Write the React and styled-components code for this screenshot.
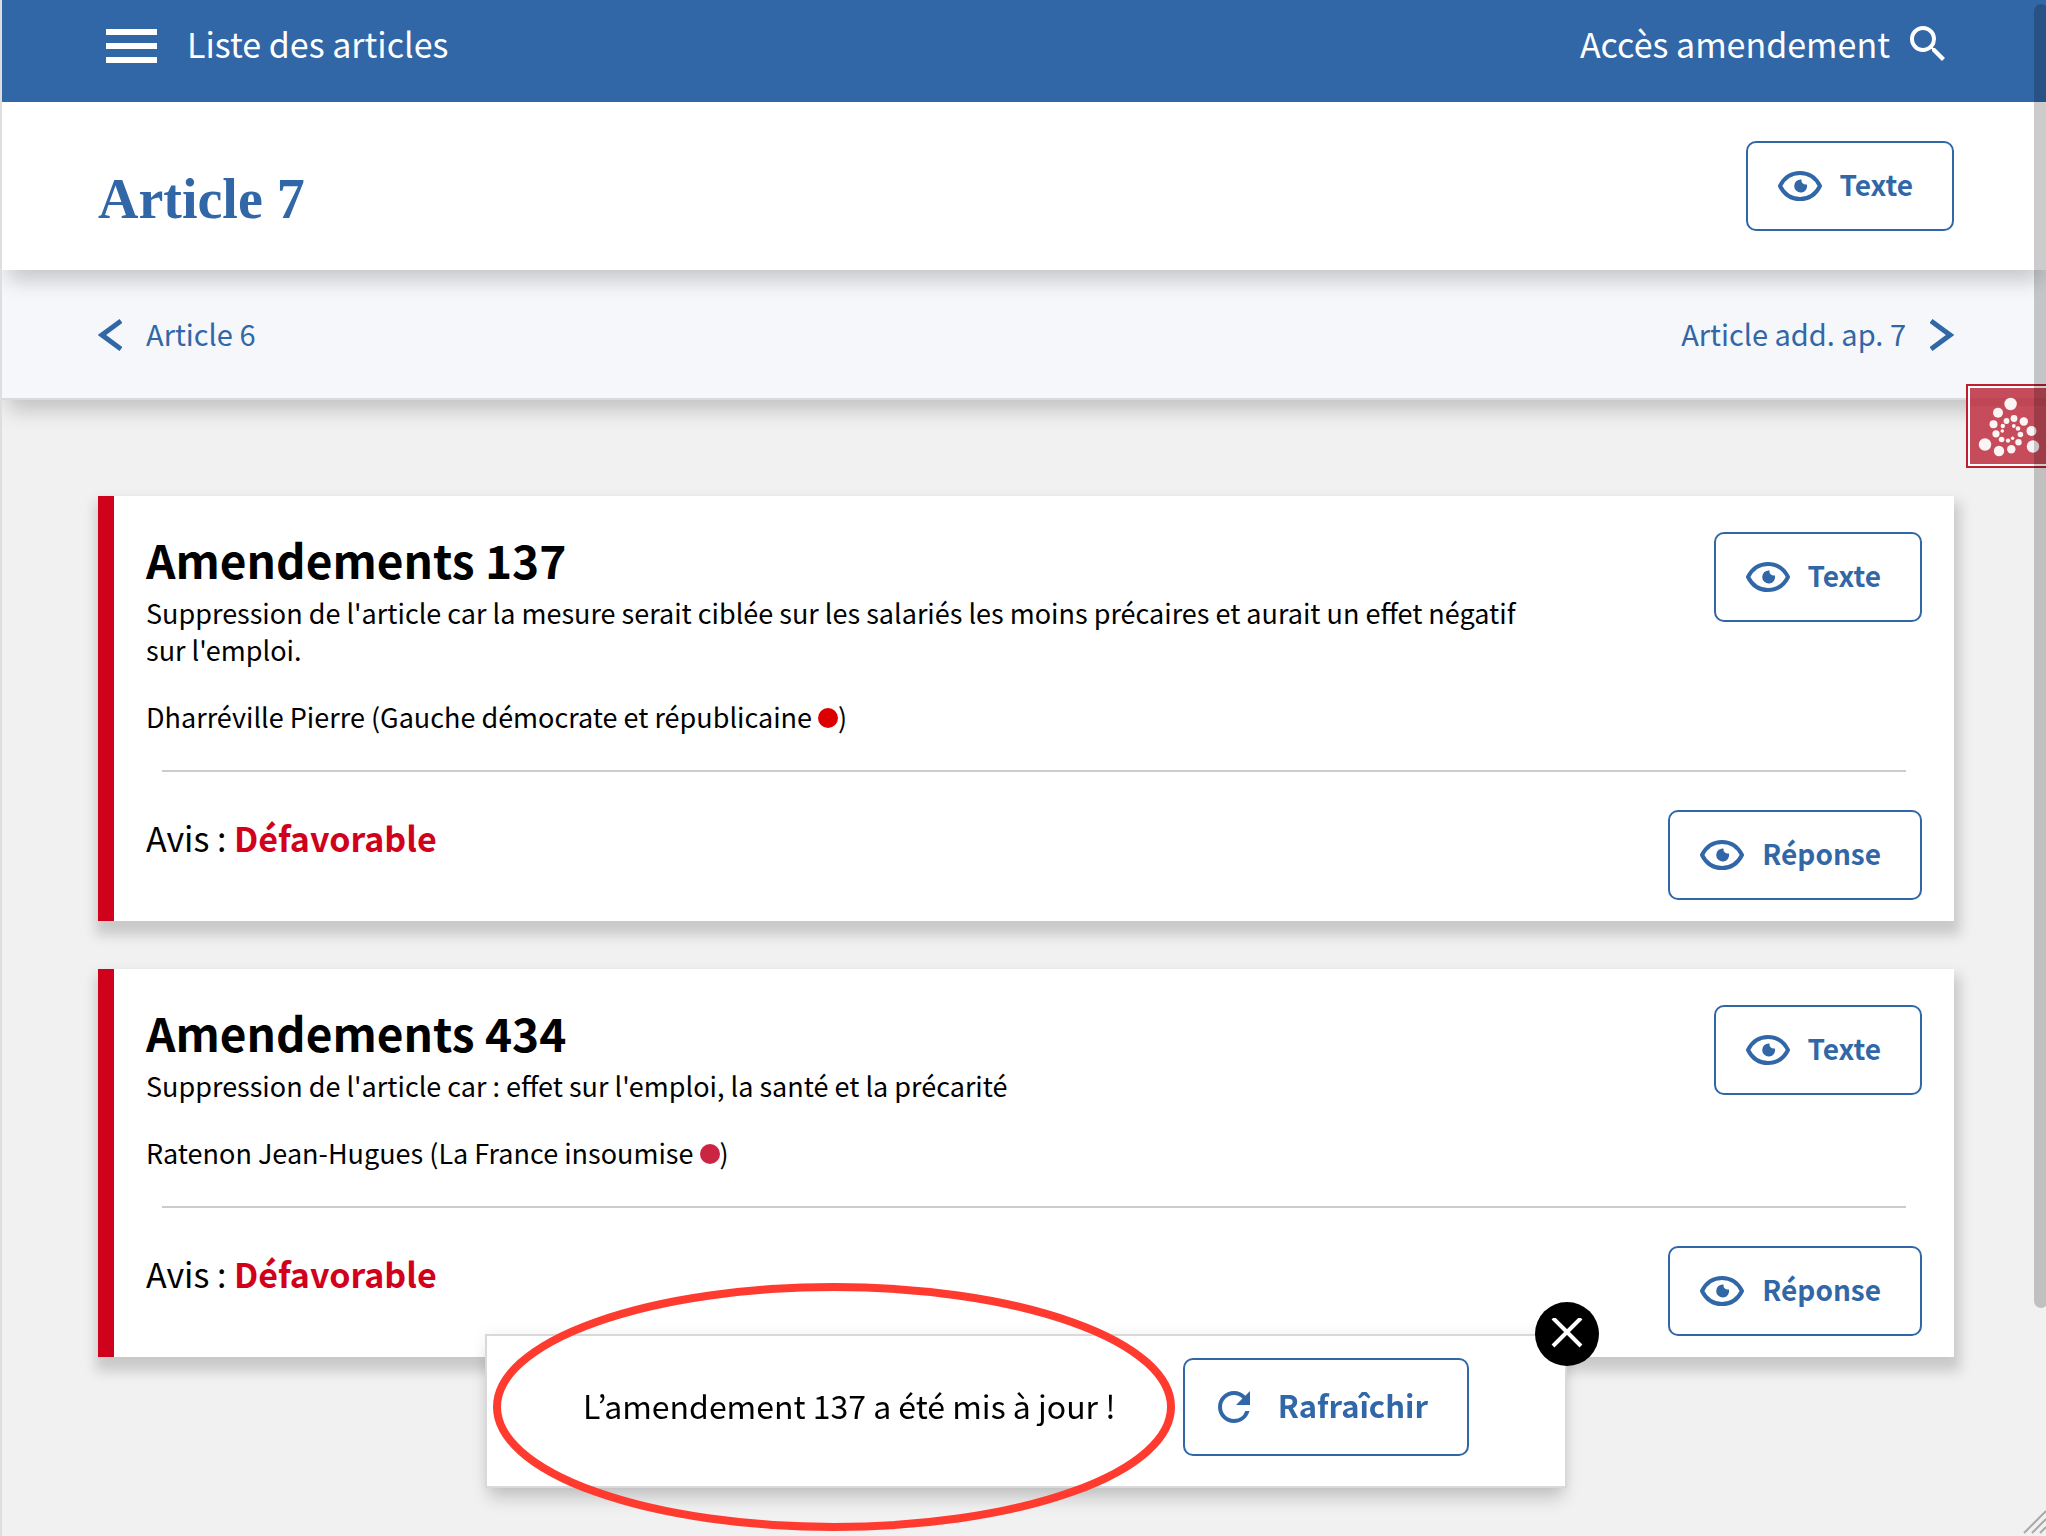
import React from 'react';
import styled, { createGlobalStyle } from 'styled-components';

const blue = '#3267a7';
const red = '#d0021b';
const sans = '"Noto Sans CJK KR", "Noto Sans", sans-serif';
const barShadow = '0 16px 20px -6px rgba(0, 0, 0, 0.2)';

const GlobalStyle = createGlobalStyle`
  *, *::before, *::after { box-sizing: border-box; }
  body { margin: 0; background: #f1f1f1; color: #000; font-family: ${sans}; font-size: 27px; line-height: 37px; }
  h1, h2, p { margin: 0; }
  a { color: inherit; text-decoration: none; }
`;

const Page = styled.div`
  min-height: 100vh;
  border-left: 2px solid #dedede;
  overflow: hidden;
`;

const TopBar = styled.header`
  display: flex;
  align-items: flex-start;
  justify-content: space-between;
  height: 102px;
  padding: 20px 94px 0 104px;
  background: ${blue};
  color: #fff;
`;

const TopLink = styled.a`
  display: flex;
  align-items: center;
  gap: ${(p) => p.$gap}px;
  font-size: 34px;
  line-height: 48px;
`;

const TitleBar = styled.div`
  position: relative;
  z-index: 1;
  display: flex;
  align-items: center;
  justify-content: space-between;
  height: 168px;
  padding: 0 92px 0 96px;
  background: #fff;
  box-shadow: ${barShadow};
`;

const Title = styled.h1`
  padding-top: 26px;
  color: ${blue};
  font-family: "Liberation Serif", serif;
  font-size: 56px;
  font-weight: 700;
  line-height: 64px;
`;

const SiblingNav = styled.nav`
  display: flex;
  align-items: center;
  justify-content: space-between;
  height: 130px;
  padding: 2px 92px 0 96px;
  border-bottom: 2px solid #d9dada;
  background: #f5f7fb;
  box-shadow: ${barShadow};
`;

const SiblingLink = styled.a`
  display: flex;
  align-items: center;
  gap: 24px;
  color: ${blue};
  font-size: 29px;
`;

const Cards = styled.main`
  display: flex;
  flex-direction: column;
  gap: 48px;
  padding: 96px 92px 180px 96px;
`;

const Card = styled.article`
  padding: 36px 32px 21px;
  border-left: 16px solid ${red};
  background: #fff;
  box-shadow: 2px 10px 12px 4px rgba(0, 0, 0, 0.17);
`;

const CardRow = styled.div`
  display: flex;
  align-items: flex-start;
  justify-content: space-between;
`;

const Summary = styled.div`
  max-width: 1400px;
`;

const CardTitle = styled.h2`
  margin-bottom: 8px;
  font-size: 46px;
  font-weight: 700;
  line-height: 54px;
`;

const Author = styled.p`
  margin-top: 30px;
`;

const Dot = styled.span`
  display: inline-block;
  width: 20px;
  height: 20px;
  border-radius: 50%;
  background: ${(p) => p.$color};
`;

const Divider = styled.hr`
  height: 2px;
  margin: 35px 16px 38px;
  border: 0;
  background: #ccc;
`;

const Opinion = styled.p`
  font-size: 34px;
  line-height: 56px;

  strong { color: ${red}; font-weight: 700; }
`;

const OutlineButton = styled.button`
  display: flex;
  flex: none;
  align-items: center;
  gap: ${(p) => (p.$large ? 20 : 18)}px;
  height: ${(p) => (p.$large ? 98 : 90)}px;
  padding: ${(p) => (p.$large ? '0 39px 0 25px' : '0 39px 0 30px')};
  border: 2px solid ${blue};
  border-radius: 10px;
  background: #fff;
  color: ${blue};
  font-family: ${sans};
  font-size: ${(p) => (p.$large ? 31 : 28)}px;
  font-weight: 700;
  line-height: 40px;
`;

const Label = styled.span`
  padding-bottom: 4px;
`;

const Dock = styled.div`
  position: fixed;
  right: 0;
  bottom: 48px;
  left: 0;
  z-index: 2;
  display: flex;
  justify-content: center;
  padding: 0 92px 0 98px;
`;

const Notice = styled.div`
  position: relative;
  display: flex;
  align-items: center;
  justify-content: space-between;
  width: 1082px;
  height: 154px;
  padding: 0 96px 8px;
  border: 2px solid #d9d9d9;
  background: #fff;
  box-shadow: 0 14px 16px -4px rgba(0, 0, 0, 0.18), 0 0 16px rgba(0, 0, 0, 0.06);
  font-size: 32px;
`;

const CloseButton = styled.button`
  position: absolute;
  top: -34px;
  right: -34px;
  display: flex;
  align-items: center;
  justify-content: center;
  width: 64px;
  height: 64px;
  padding: 0;
  border: 0;
  border-radius: 50%;
  background: #000;
  color: #fff;
`;

const Highlight = styled.svg`
  position: absolute;
  top: -53px;
  left: 6px;
  pointer-events: none;
`;

const Badge = styled.button`
  position: fixed;
  top: 384px;
  right: -4px;
  z-index: 3;
  width: 84px;
  height: 84px;
  padding: 2px;
  border: 2px solid #be1e2d;
  background: #fff;

  svg { display: block; }
`;

const ScrollThumb = styled.div`
  position: fixed;
  top: 4px;
  right: -2px;
  z-index: 4;
  width: 14px;
  height: 1304px;
  border-radius: 7px;
  background: rgba(0, 0, 0, 0.2);
`;

const Grip = styled.svg`
  position: fixed;
  right: 0;
  bottom: 0;
`;

const MenuIcon = () => (
  <svg width="51" height="38" viewBox="0 0 51 38" fill="currentColor" aria-hidden="true">
    <path d="M0 4h51v6H0zM0 18h51v6H0zM0 32h51v6H0z" />
  </svg>
);

const SearchIcon = () => (
  <svg width="48" height="48" viewBox="0 0 24 24" fill="currentColor" aria-hidden="true">
    <path d="M15.5 14h-.79l-.28-.27A6.47 6.47 0 0 0 16 9.5 6.5 6.5 0 1 0 9.5 16c1.61 0 3.09-.59 4.23-1.57l.27.28v.79l5 4.99L20.49 19l-4.99-5zm-6 0C7.01 14 5 11.99 5 9.5S7.01 5 9.5 5 14 7.01 14 9.5 11.99 14 9.5 14z" />
  </svg>
);

const EyeIcon = () => (
  <svg width="44" height="30" viewBox="0 0 44 30" aria-hidden="true">
    <path d="M2 15C6 7 13 2 22 2s16 5 20 13c-4 8-11 13-20 13S6 23 2 15z" fill="none" stroke="currentColor" strokeWidth="4" strokeLinejoin="round" />
    <path d="M23.500 8.500A6.500 6.500 0 1 0 29 13.400a4.300 4.300 0 0 1-5.500-4.900z" fill="currentColor" />
  </svg>
);

const RefreshIcon = () => (
  <svg width="48" height="48" viewBox="0 0 24 24" fill="currentColor" aria-hidden="true">
    <path d="M17.65 6.350A7.958 7.958 0 0 0 12 4c-4.420 0-7.990 3.580-7.990 8s3.570 8 7.990 8c3.730 0 6.840-2.550 7.730-6h-2.080A5.990 5.990 0 0 1 12 18c-3.310 0-6-2.690-6-6s2.690-6 6-6c1.660 0 3.140.69 4.220 1.780L13 11h7V4l-2.350 2.350z" />
  </svg>
);

const Chevron = ({ right }) => (
  <svg width="24" height="32" viewBox="0 0 24 32" fill="none" stroke="currentColor" strokeWidth="5" aria-hidden="true">
    <path d={right ? 'M1 2l19 14L1 30' : 'M23 2L4 16l19 14'} />
  </svg>
);

const dots = [
  [44.6, 16, 6.200], [32, 24.800, 5], [27.500, 36.200, 4], [30, 45.800, 3.600], [35.600, 51.500, 2.800],
  [42, 52.600, 2.200], [46.600, 50.300, 1.700], [52.500, 54.200, 3.200], [54.400, 46.500, 2.800], [52, 40.500, 2.300],
  [47.800, 38, 1.900], [48, 30.500, 3.400], [40.500, 33, 2.900], [36.800, 38, 2.200], [36.300, 43, 1.800],
  [57.800, 33.500, 4.200], [65.500, 43, 5], [67, 58.500, 6.200], [45.300, 61.200, 4.200], [33, 63, 5.200], [19, 56.500, 6.200],
];

const BadgeIcon = () => (
  <svg width="76" height="76" viewBox="4 4 76 76" aria-hidden="true">
    <rect x="4" y="4" width="76" height="76" fill="#c64c5b" />
    <path d="M4 14h76v8H4z" fill="#bf4655" />
    {dots.map(([x, y, r]) => <circle key={`${x}-${y}`} cx={x} cy={y + 4} r={r} fill="#fbf4f5" />)}
  </svg>
);

const EyeButton = ({ children }) => (
  <OutlineButton type="button"><EyeIcon /><Label>{children}</Label></OutlineButton>
);

const amendments = [
  {
    number: 137,
    summary: "Suppression de l'article car la mesure serait ciblée sur les salariés les moins précaires et aurait un effet négatif sur l'emploi.",
    author: 'Dharréville Pierre',
    group: 'Gauche démocrate et républicaine',
    color: '#dd0000',
  },
  {
    number: 434,
    summary: "Suppression de l'article car : effet sur l'emploi, la santé et la précarité",
    author: 'Ratenon Jean-Hugues',
    group: 'La France insoumise',
    color: '#cc2443',
  },
];

const Amendment = ({ number, summary, author, group, color }) => (
  <Card>
    <CardRow>
      <Summary>
        <CardTitle>Amendements {number}</CardTitle>
        <p>{summary}</p>
        <Author>{author} ({group} <Dot $color={color} />)</Author>
      </Summary>
      <EyeButton>Texte</EyeButton>
    </CardRow>
    <Divider />
    <CardRow>
      <Opinion>Avis : <strong>Défavorable</strong></Opinion>
      <EyeButton>Réponse</EyeButton>
    </CardRow>
  </Card>
);

export default function App() {
  return (
    <>
      <GlobalStyle />
      <Page>
        <TopBar>
          <TopLink href="#articles" $gap={30}><MenuIcon />Liste des articles</TopLink>
          <TopLink href="#recherche" $gap={14}>Accès amendement<SearchIcon /></TopLink>
        </TopBar>
        <TitleBar>
          <Title>Article 7</Title>
          <EyeButton>Texte</EyeButton>
        </TitleBar>
        <SiblingNav>
          <SiblingLink href="#article-6"><Chevron /><Label>Article 6</Label></SiblingLink>
          <SiblingLink href="#article-add-7"><Label>Article add. ap. 7</Label><Chevron right /></SiblingLink>
        </SiblingNav>
        <Cards>
          {amendments.map((a) => <Amendment key={a.number} {...a} />)}
        </Cards>
      </Page>
      <Dock>
        <Notice role="status">
          <Label as="p">L’amendement 137 a été mis à jour !</Label>
          <OutlineButton type="button" $large><RefreshIcon /><Label>Rafraîchir</Label></OutlineButton>
          <CloseButton type="button" aria-label="Fermer">
            <svg width="32" height="32" viewBox="0 0 32 32" stroke="currentColor" strokeWidth="4" aria-hidden="true">
              <path d="M2 0l28 28M30 0L2 28" />
            </svg>
          </CloseButton>
          <Highlight width="682" height="248" viewBox="0 0 682 248" aria-hidden="true">
            <ellipse cx="341" cy="124" rx="337" ry="120" fill="none" stroke="#ff3b30" strokeWidth="8" />
          </Highlight>
        </Notice>
      </Dock>
      <Badge type="button" aria-label="Outils"><BadgeIcon /></Badge>
      <ScrollThumb />
      <Grip width="24" height="26" viewBox="0 0 24 26" stroke="#a9a9a9" strokeWidth="2" aria-hidden="true">
        <path d="M2 23L24 1M10 23L24 9M18 23l6-6" />
      </Grip>
    </>
  );
}
